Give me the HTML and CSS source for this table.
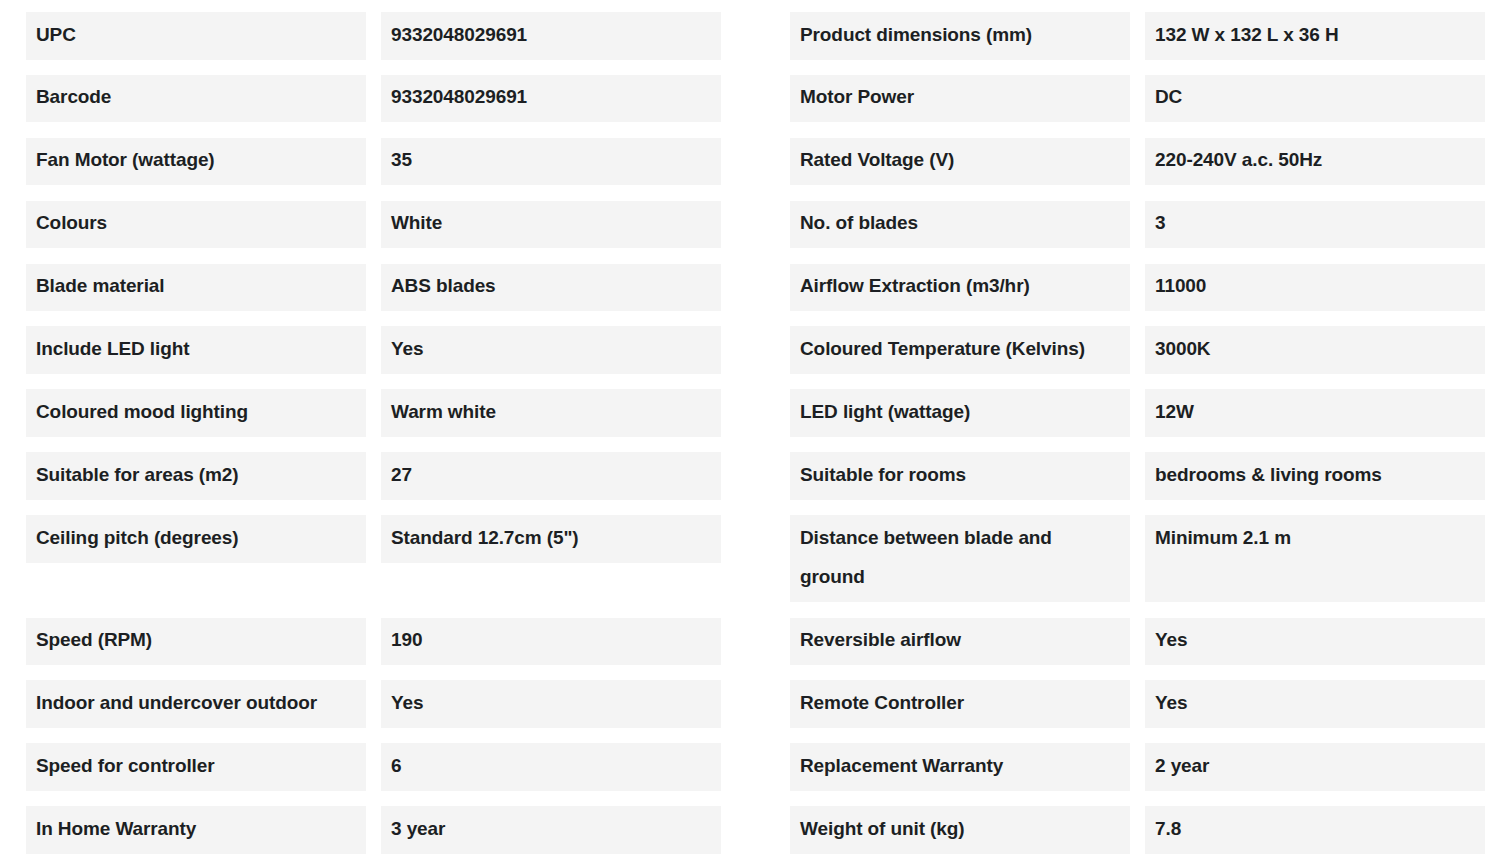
FILE: index.html
```html
<!DOCTYPE html>
<html lang="en">
<head>
<meta charset="utf-8">
<title>Specifications</title>
<link rel="stylesheet" href="styles.css">
</head>
<body>
<div class="specs">
  <div class="row"><div class="cell">UPC</div><div class="cell">9332048029691</div></div>
  <div class="row"><div class="cell">Product dimensions (mm)</div><div class="cell">132 W x 132 L x 36 H</div></div>
  <div class="row"><div class="cell">Barcode</div><div class="cell">9332048029691</div></div>
  <div class="row"><div class="cell">Motor Power</div><div class="cell">DC</div></div>
  <div class="row"><div class="cell">Fan Motor (wattage)</div><div class="cell">35</div></div>
  <div class="row"><div class="cell">Rated Voltage (V)</div><div class="cell">220-240V a.c. 50Hz</div></div>
  <div class="row"><div class="cell">Colours</div><div class="cell">White</div></div>
  <div class="row"><div class="cell">No. of blades</div><div class="cell">3</div></div>
  <div class="row"><div class="cell">Blade material</div><div class="cell">ABS blades</div></div>
  <div class="row"><div class="cell">Airflow Extraction (m3/hr)</div><div class="cell">11000</div></div>
  <div class="row"><div class="cell">Include LED light</div><div class="cell">Yes</div></div>
  <div class="row"><div class="cell">Coloured Temperature (Kelvins)</div><div class="cell">3000K</div></div>
  <div class="row"><div class="cell">Coloured mood lighting</div><div class="cell">Warm white</div></div>
  <div class="row"><div class="cell">LED light (wattage)</div><div class="cell">12W</div></div>
  <div class="row"><div class="cell">Suitable for areas (m2)</div><div class="cell">27</div></div>
  <div class="row"><div class="cell">Suitable for rooms</div><div class="cell">bedrooms &amp; living rooms</div></div>
  <div class="row"><div class="cell">Ceiling pitch (degrees)</div><div class="cell">Standard 12.7cm (5")</div></div>
  <div class="row"><div class="cell">Distance between blade and ground</div><div class="cell">Minimum 2.1 m</div></div>
  <div class="row"><div class="cell">Speed (RPM)</div><div class="cell">190</div></div>
  <div class="row"><div class="cell">Reversible airflow</div><div class="cell">Yes</div></div>
  <div class="row"><div class="cell">Indoor and undercover outdoor</div><div class="cell">Yes</div></div>
  <div class="row"><div class="cell">Remote Controller</div><div class="cell">Yes</div></div>
  <div class="row"><div class="cell">Speed for controller</div><div class="cell">6</div></div>
  <div class="row"><div class="cell">Replacement Warranty</div><div class="cell">2 year</div></div>
  <div class="row"><div class="cell">In Home Warranty</div><div class="cell">3 year</div></div>
  <div class="row"><div class="cell">Weight of unit (kg)</div><div class="cell">7.8</div></div>
</div>
</body>
</html>
```

FILE: styles.css
```css
html, body {
  margin: 0;
  padding: 0;
  background: #ffffff;
}

body {
  font-family: "Liberation Sans", Arial, sans-serif;
  color: #1c1f23;
}

.specs {
  display: grid;
  grid-template-columns: 695px 695px;
  column-gap: 69px;
  row-gap: 15.4px;
  align-items: start;
  padding: 12px 15px 0 26px;
}

.row {
  display: grid;
  grid-template-columns: 340px 340px;
  column-gap: 15px;
}

.cell {
  background: #f4f4f4;
  padding: 2.5px 10px 5.5px;
  font-size: 19px;
  font-weight: 700;
  line-height: 39.5px;
  letter-spacing: -0.1px;
}
```
